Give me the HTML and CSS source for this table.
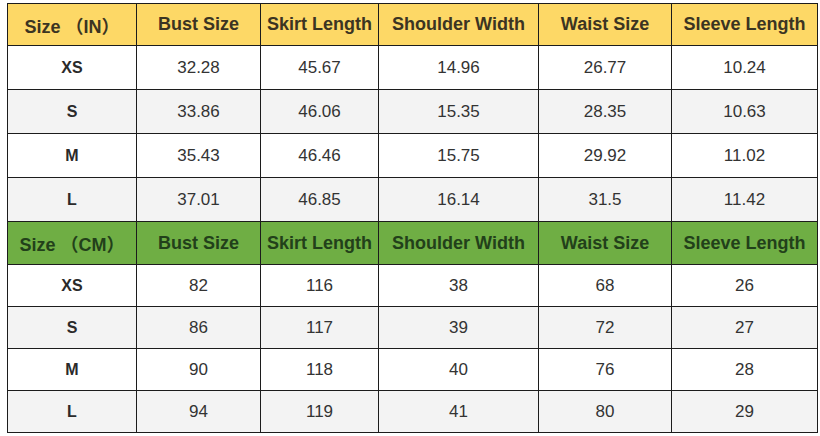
FILE: index.html
```html
<!DOCTYPE html>
<html>
<head>
<meta charset="utf-8">
<link rel="stylesheet" href="styles.css">
</head>
<body>
<div class="wrap">
<table class="chart">
  <colgroup>
    <col class="c1"><col class="c2"><col class="c3"><col class="c4"><col class="c5"><col class="c6">
  </colgroup>
  <tbody>
    <tr class="head head-in">
      <th>Size （IN）</th><th>Bust Size</th><th>Skirt Length</th><th>Shoulder Width</th><th>Waist Size</th><th>Sleeve Length</th>
    </tr>
    <tr class="row-in"><td class="sz">XS</td><td>32.28</td><td>45.67</td><td>14.96</td><td>26.77</td><td>10.24</td></tr>
    <tr class="row-in alt"><td class="sz">S</td><td>33.86</td><td>46.06</td><td>15.35</td><td>28.35</td><td>10.63</td></tr>
    <tr class="row-in"><td class="sz">M</td><td>35.43</td><td>46.46</td><td>15.75</td><td>29.92</td><td>11.02</td></tr>
    <tr class="row-in alt"><td class="sz">L</td><td>37.01</td><td>46.85</td><td>16.14</td><td>31.5</td><td>11.42</td></tr>
    <tr class="head head-cm">
      <th>Size （CM）</th><th>Bust Size</th><th>Skirt Length</th><th>Shoulder Width</th><th>Waist Size</th><th>Sleeve Length</th>
    </tr>
    <tr class="row-cm"><td class="sz">XS</td><td>82</td><td>116</td><td>38</td><td>68</td><td>26</td></tr>
    <tr class="row-cm alt"><td class="sz">S</td><td>86</td><td>117</td><td>39</td><td>72</td><td>27</td></tr>
    <tr class="row-cm"><td class="sz">M</td><td>90</td><td>118</td><td>40</td><td>76</td><td>28</td></tr>
    <tr class="row-cm alt"><td class="sz">L</td><td>94</td><td>119</td><td>41</td><td>80</td><td>29</td></tr>
  </tbody>
</table>
</div>
</body>
</html>
```
FILE: styles.css
```css
html, body {
  margin: 0;
  padding: 0;
  background: #ffffff;
}
.wrap {
  padding: 3px 0 0 7px;
}
.chart {
  border-collapse: collapse;
  table-layout: fixed;
  width: 810px;
  font-family: "Liberation Sans", Arial, "Noto Sans CJK SC", sans-serif;
  color: #333333;
}
.c1 { width: 129px; }
.c2 { width: 124px; }
.c3 { width: 118px; }
.c4 { width: 160px; }
.c5 { width: 133px; }
.c6 { width: 146px; }
.chart th, .chart td {
  border: 1px solid #1c1c1c;
  text-align: center;
  vertical-align: middle;
  padding: 0;
  white-space: nowrap;
  overflow: hidden;
}
.chart th {
  font-size: 18px;
  font-weight: bold;
}
.chart td {
  font-size: 17px;
  font-weight: normal;
}
.chart td.sz {
  font-size: 16px;
  font-weight: bold;
  color: #2a2a2a;
}
.head-in th {
  background: #fdd866;
  color: #3b3422;
}
.head-in { height: 42px; }
.head-cm th {
  background: #6fae44;
  color: #22401a;
}
.head-cm { height: 43px; }
.row-in { height: 44px; }
.row-cm { height: 42px; }
.alt td {
  background: #f3f3f3;
}
```
